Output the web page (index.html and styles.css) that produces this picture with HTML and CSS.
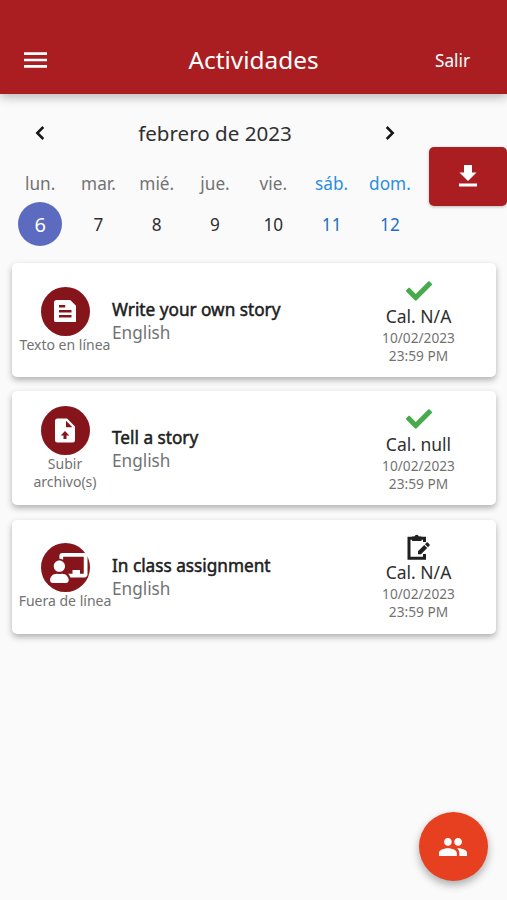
FILE: index.html
```html
<!DOCTYPE html>
<html lang="es">
<head>
<meta charset="utf-8">
<meta name="viewport" content="width=device-width, initial-scale=1">
<title>Actividades</title>
<link rel="stylesheet" href="styles.css">
</head>
<body>
<header class="topbar">
  <svg class="menu" viewBox="3 6 18 12"><path d="M3 18h18v-2H3v2zm0-5h18v-2H3v2zm0-7v2h18V6H3z"/></svg>
  <h1 class="heading">Actividades</h1>
  <span class="logout">Salir</span>
</header>
<section class="calendar">
  <div class="weeks">
    <div class="month">
      <svg class="arrow" viewBox="0 0 10 16"><path d="M8.3 2 2.3 8l6 6"/></svg>
      <span class="month-name">febrero de 2023</span>
      <svg class="arrow" viewBox="0 0 10 16"><path d="m1.7 2 6 6-6 6"/></svg>
    </div>
    <div class="days">
      <span>lun.</span><span>mar.</span><span>mié.</span><span>jue.</span><span>vie.</span><span class="weekend">sáb.</span><span class="weekend">dom.</span>
    </div>
    <div class="dates">
      <span class="selected">6</span><span>7</span><span>8</span><span>9</span><span>10</span><span class="weekend">11</span><span class="weekend">12</span>
    </div>
  </div>
  <div class="download">
    <svg viewBox="0 0 18 22"><path d="M5 0h8v7.500h4.500L9 16 .5 7.500H5zM0 18.500h18v3H0z"/></svg>
  </div>
</section>
<main class="list">
  <article class="card">
    <div class="kind">
      <div class="badge"><svg class="document" viewBox="3 3 18 18"><path d="M16 3H5c-1.100 0-2 .9-2 2v14c0 1.100.9 2 2 2h14c1.100 0 2-.9 2-2V8l-5-5zM7 7h5v2H7V7zm10 10H7v-2h10v2zm0-4H7v-2h10v2z"/></svg></div>
      <span class="kind-name">Texto en línea</span>
    </div>
    <div class="info"><span class="title">Write your own story</span><span class="subject">English</span></div>
    <div class="result">
      <svg class="check" viewBox="0 0 512 512"><path d="M173.898 439.404l-166.400-166.400c-9.997-9.997-9.997-26.206 0-36.204l36.203-36.204c9.997-9.998 26.207-9.998 36.204 0L192 312.690 432.095 72.596c9.997-9.997 26.207-9.997 36.204 0l36.203 36.204c9.997 9.997 9.997 26.206 0 36.204l-294.400 294.401c-9.998 9.997-26.207 9.997-36.204-.001z"/></svg>
      <span class="grade">Cal. N/A</span><span class="due">10/02/2023<br>23:59 PM</span>
    </div>
  </article>
  <article class="card">
    <div class="kind">
      <div class="badge"><svg class="upload" viewBox="0 0 20 24"><path fill-rule="evenodd" d="M2.500 0H12l8 8v13.500a2.500 2.500 0 0 1-2.500 2.500h-15A2.500 2.500 0 0 1 0 21.500v-19A2.500 2.500 0 0 1 2.500 0zM11 2.300V8.700H17.400zM10 12.500 5.700 17H8.500v3.500h3V17h2.800z"/></svg></div>
      <span class="kind-name">Subir<br>archivo(s)</span>
    </div>
    <div class="info"><span class="title">Tell a story</span><span class="subject">English</span></div>
    <div class="result">
      <svg class="check" viewBox="0 0 512 512"><path d="M173.898 439.404l-166.400-166.400c-9.997-9.997-9.997-26.206 0-36.204l36.203-36.204c9.997-9.998 26.207-9.998 36.204 0L192 312.690 432.095 72.596c9.997-9.997 26.207-9.997 36.204 0l36.203 36.204c9.997 9.997 9.997 26.206 0 36.204l-294.400 294.401c-9.998 9.997-26.207 9.997-36.204-.001z"/></svg>
      <span class="grade">Cal. null</span><span class="due">10/02/2023<br>23:59 PM</span>
    </div>
  </article>
  <article class="card">
    <div class="kind">
      <div class="badge"><svg class="teacher" viewBox="0 0 640 512"><path d="M208 352c-2.390 0-4.780.35-7.060 1.090C187.980 357.300 174.350 360 160 360c-14.370 0-27.980-2.700-40.950-6.910-2.280-.74-4.660-1.090-7.050-1.090C49.940 352-.33 402.480 0 464.620.14 490.880 21.730 512 48 512h224c26.270 0 47.860-21.120 48-47.380.33-62.140-49.940-112.620-112-112.620zm-48-32c53.020 0 96-42.980 96-96s-42.980-96-96-96-96 42.980-96 96 42.980 96 96 96zM592 0H208c-26.470 0-48 22.250-48 49.590V96c23.420 0 45.100 6.780 64 17.800V64h352v288h-64v-64H384v64h-76.240c19.100 16.690 33.120 38.730 39.690 64H592c26.470 0 48-22.250 48-49.590V49.590C640 22.250 618.470 0 592 0z"/></svg></div>
      <span class="kind-name">Fuera de línea</span>
    </div>
    <div class="info"><span class="title">In class assignment</span><span class="subject">English</span></div>
    <div class="result">
      <svg class="clipboard" viewBox="0 0 26 26"><path class="frame" d="M18.500 8V4.200H3V24.200H18.500V20"/><path d="M6 2.500H8.500a2.300 2.300 0 0 1 4.400 0H15.500v4.500H6zM12 17.200l6.200-6.200 3 3-6.200 6.200H12zM19 10.200l1.600-1.600q.6-.5 1.200 0l1.800 1.800q.5.600 0 1.200L22 13.200z"/></svg>
      <span class="grade">Cal. N/A</span><span class="due">10/02/2023<br>23:59 PM</span>
    </div>
  </article>
</main>
<div class="fab"><svg viewBox="1 5 22 14"><path d="M16 11c1.660 0 2.990-1.340 2.990-3S17.660 5 16 5c-1.660 0-3 1.340-3 3s1.340 3 3 3zm-8 0c1.660 0 2.990-1.340 2.990-3S9.660 5 8 5C6.340 5 5 6.340 5 8s1.340 3 3 3zm0 2c-2.330 0-7 1.170-7 3.500V19h14v-2.500c0-2.330-4.670-3.500-7-3.500zm8 0c-.29 0-.62.020-.97.050 1.160.84 1.970 1.970 1.970 3.450V19h6v-2.500c0-2.330-4.670-3.500-7-3.500z"/></svg></div>
</body>
</html>
```
FILE: styles.css
```css
* { box-sizing: border-box; }
body {
  margin: 0;
  height: 900px;
  overflow: hidden;
  background: #fafafa;
  color: #303030;
  font-family: "Noto Sans", sans-serif;
}
svg { display: block; fill: #fff; }
.topbar {
  display: grid;
  grid-template-columns: 109px 1fr 109px;
  align-items: center;
  height: 94px;
  padding-top: 25px;
  background: #aa1e22;
  color: #fff;
  box-shadow: 0 3px 10px rgba(0, 0, 0, .28);
}
.menu { width: 23px; height: 16px; margin-left: 24px; }
.heading { margin: 0; font-size: 24.400px; font-weight: 400; text-align: center; }
.logout { padding-top: 2px; font-size: 17.200px; justify-self: center; }
.calendar { display: flex; height: 169px; }
.weeks { width: 429px; padding: 22px 9px 0 11px; }
.month {
  display: flex;
  justify-content: space-between;
  align-items: center;
  height: 34px;
  padding: 0 25px 0 24px;
  font-size: 20.600px;
}
.arrow { width: 10px; height: 16px; fill: none; stroke: #161616; stroke-width: 2.500; }
.days, .dates {
  display: grid;
  grid-template-columns: repeat(7, 58.300px);
  justify-items: center;
  align-items: center;
}
.days { height: 52px; padding-top: 17px; font-size: 17.200px; color: #727272; align-items: start; }
.days span { line-height: 34px; }
.dates { height: 44px; font-size: 17.200px; }
.days .weekend { color: #2b8de0; }
.dates .weekend { color: #2470c4; }
.selected {
  display: grid;
  place-items: center;
  width: 44px;
  height: 44px;
  border-radius: 50%;
  background: #5c6bc0;
  color: #fff;
  font-size: 20px;
}
.download {
  display: grid;
  place-items: center;
  width: 78px;
  height: 59px;
  margin-top: 53px;
  border-radius: 5px;
  background: #aa1e22;
  box-shadow: 0 1px 3px rgba(0, 0, 0, .25);
}
.download svg { width: 18px; height: 22px; margin-top: -1px; }
.list { display: grid; gap: 14.250px; padding: 0 11px 0 12px; }
.card {
  display: grid;
  grid-template-columns: 100px 1fr 155px;
  align-items: center;
  height: 114px;
  border-radius: 5px;
  background: #fff;
  box-shadow: 0 3px 6px rgba(0, 0, 0, .3);
}
.kind { display: flex; flex-direction: column; align-items: center; width: 106px; }
.badge {
  display: grid;
  place-items: center;
  width: 49px;
  height: 49px;
  border-radius: 50%;
  background: #85151b;
}
.document { width: 22.500px; height: 22.500px; }
.upload { width: 20px; height: 25px; }
.teacher { width: 37.500px; height: 30px; margin-left: 8px; }
.kind-name { font-size: 14px; line-height: 18px; color: #727272; text-align: center; white-space: nowrap; }
.info { display: flex; flex-direction: column; line-height: 23px; padding-top: 1px; }
.title { font-size: 17.200px; color: #202020; -webkit-text-stroke: .5px #202020; }
.subject { font-size: 17.200px; color: #727272; }
.result { display: flex; flex-direction: column; align-items: center; padding-top: 2px; text-align: center; }
.check { width: 26px; height: 26px; fill: #45ab4b; }
.clipboard { width: 26px; height: 26px; fill: #202020; }
.frame { fill: none; stroke: #202020; stroke-width: 3; }
.grade { font-size: 17.500px; line-height: 25px; }
.due { font-size: 13.700px; line-height: 18px; color: #727272; }
.fab {
  position: absolute;
  left: 419px;
  top: 812px;
  display: grid;
  place-items: center;
  width: 69px;
  height: 69px;
  border-radius: 50%;
  background: #e64020;
  box-shadow: 0 4px 9px rgba(0, 0, 0, .32);
}
.fab svg { width: 28px; height: 18px; margin-left: -1px; }
```
